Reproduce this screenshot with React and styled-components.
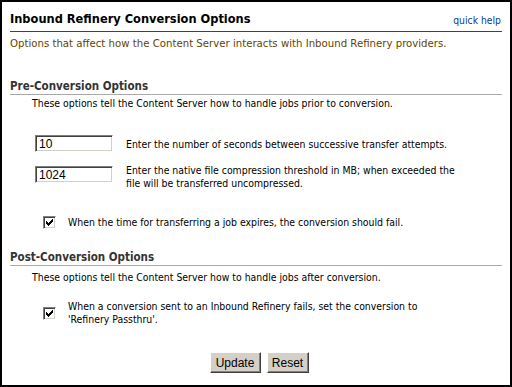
import React from 'react';
import styled, { createGlobalStyle } from 'styled-components';

const GlobalStyle = createGlobalStyle`
  html, body {
    margin: 0;
    padding: 0;
    background: #fff;
  }
  body {
    font-family: "DejaVu Sans Condensed", "DejaVu Sans", sans-serif;
    font-size: 10.4px;
    color: #000;
  }
`;

const Frame = styled.div`
  width: 512px;
  height: 387px;
  box-sizing: border-box;
  border: 2px solid #000;
  padding: 8px 8px 0 8px;
  display: flex;
  flex-direction: column;
`;

const Header = styled.div`
  display: flex;
  justify-content: space-between;
  align-items: flex-end;
  border-bottom: 1px solid #1c4a82;
  padding-bottom: 4px;
  margin-top: 1px;
`;

const Title = styled.h1`
  margin: 0;
  font-size: 12.7px;
  font-weight: bold;
  line-height: 16px;
`;

const HelpLink = styled.a`
  color: #0b3a9a;
  text-decoration: none;
  font-size: 10.3px;
  line-height: 13px;
  margin-right: 1px;
`;

const Intro = styled.p`
  margin: 5px 0 0 0;
  font-size: 11.3px;
  color: #664400;
  line-height: 13px;
`;

const SectionHead = styled.h2`
  margin: ${({ $top }) => $top}px 0 0 0;
  font-size: 11.5px;
  font-weight: bold;
  color: #333;
  line-height: 13px;
  padding-bottom: 1px;
  border-bottom: 1px solid #a9a9a9;
`;

const SectionDesc = styled.p`
  margin: ${({ $top }) => $top}px 0 0 22px;
  line-height: 13px;
`;

const FieldRow = styled.div`
  display: grid;
  grid-template-columns: 78px 1fr;
  column-gap: 13px;
  align-items: start;
  margin: ${({ $top }) => $top}px 0 0 25px;
`;

const TextBox = styled.input`
  box-sizing: border-box;
  width: 78px;
  height: 17px;
  margin: 0;
  padding: 1px 3px 0;
  font-family: "Liberation Sans", Arial, sans-serif;
  font-size: 12px;
  color: #000;
  background: #fff;
  border: 1px solid;
  border-color: #808080 #fff #fff #808080;
  box-shadow: inset 1px 1px #404040, inset -1px -1px #d4d0c8;
  outline: none;
`;

const FieldText = styled.div`
  line-height: 13px;
  margin-top: ${({ $shift }) => $shift || 0}px;
`;

const CheckRow = styled.div`
  display: grid;
  grid-template-columns: 13px 1fr;
  column-gap: 12px;
  align-items: center;
  margin: ${({ $top }) => $top}px 0 0 33px;
`;

const CheckBox = styled.span`
  box-sizing: border-box;
  width: 13px;
  height: 13px;
  display: flex;
  align-items: center;
  justify-content: center;
  background: #fff;
  border: 1px solid;
  border-color: #808080 #fff #fff #808080;
  box-shadow: inset 1px 1px #404040, inset -1px -1px #d4d0c8;
`;

const Buttons = styled.div`
  display: flex;
  justify-content: center;
  gap: 6px;
  margin-top: ${({ $top }) => $top}px;
  padding-left: 6px;
`;

const Button = styled.button`
  box-sizing: border-box;
  height: 21px;
  width: ${({ $w }) => $w}px;
  padding: 0;
  background: #d4d0c8;
  font-family: "Liberation Sans", Arial, sans-serif;
  font-size: 12px;
  color: #000;
  border: 1px solid;
  border-color: #fff #404040 #404040 #fff;
  box-shadow: inset -1px -1px #808080, inset 1px 1px #d4d0c8;
`;

function Check() {
  return (
    <CheckBox>
      <svg width="7" height="7" viewBox="0 0 7 7">
        <path d="M0 2h1v1h1v1h1v-1h1v-1h1v-1h1v-1h1v3h-1v1h-1v1h-1v1h-1v1h-1v-1h-1v-1h-1z" fill="#000" />
      </svg>
    </CheckBox>
  );
}

export default function App() {
  return (
    <>
      <GlobalStyle />
      <Frame>
        <Header>
          <Title>Inbound Refinery Conversion Options</Title>
          <HelpLink href="#">quick help</HelpLink>
        </Header>
        <Intro>Options that affect how the Content Server interacts with Inbound Refinery providers.</Intro>

        <SectionHead $top={30}>Pre-Conversion Options</SectionHead>
        <SectionDesc $top={2}>These options tell the Content Server how to handle jobs prior to conversion.</SectionDesc>

        <FieldRow $top={25}>
          <TextBox type="text" defaultValue="10" />
          <FieldText $shift={3}>Enter the number of seconds between successive transfer attempts.</FieldText>
        </FieldRow>
        <FieldRow $top={14}>
          <TextBox type="text" defaultValue="1024" />
          <FieldText $shift={-2}>
            Enter the native file compression threshold in MB; when exceeded the<br />
            file will be transferred uncompressed.
          </FieldText>
        </FieldRow>
        <CheckRow $top={26}>
          <Check />
          <FieldText>When the time for transferring a job expires, the conversion should fail.</FieldText>
        </CheckRow>

        <SectionHead $top={22}>Post-Conversion Options</SectionHead>
        <SectionDesc $top={5}>These options tell the Content Server how to handle jobs after conversion.</SectionDesc>

        <CheckRow $top={16}>
          <Check />
          <FieldText>
            When a conversion sent to an Inbound Refinery fails, set the conversion to<br />
            'Refinery Passthru'.
          </FieldText>
        </CheckRow>

        <Buttons $top={26}>
          <Button $w={51}>Update</Button>
          <Button $w={42}>Reset</Button>
        </Buttons>
      </Frame>
    </>
  );
}
